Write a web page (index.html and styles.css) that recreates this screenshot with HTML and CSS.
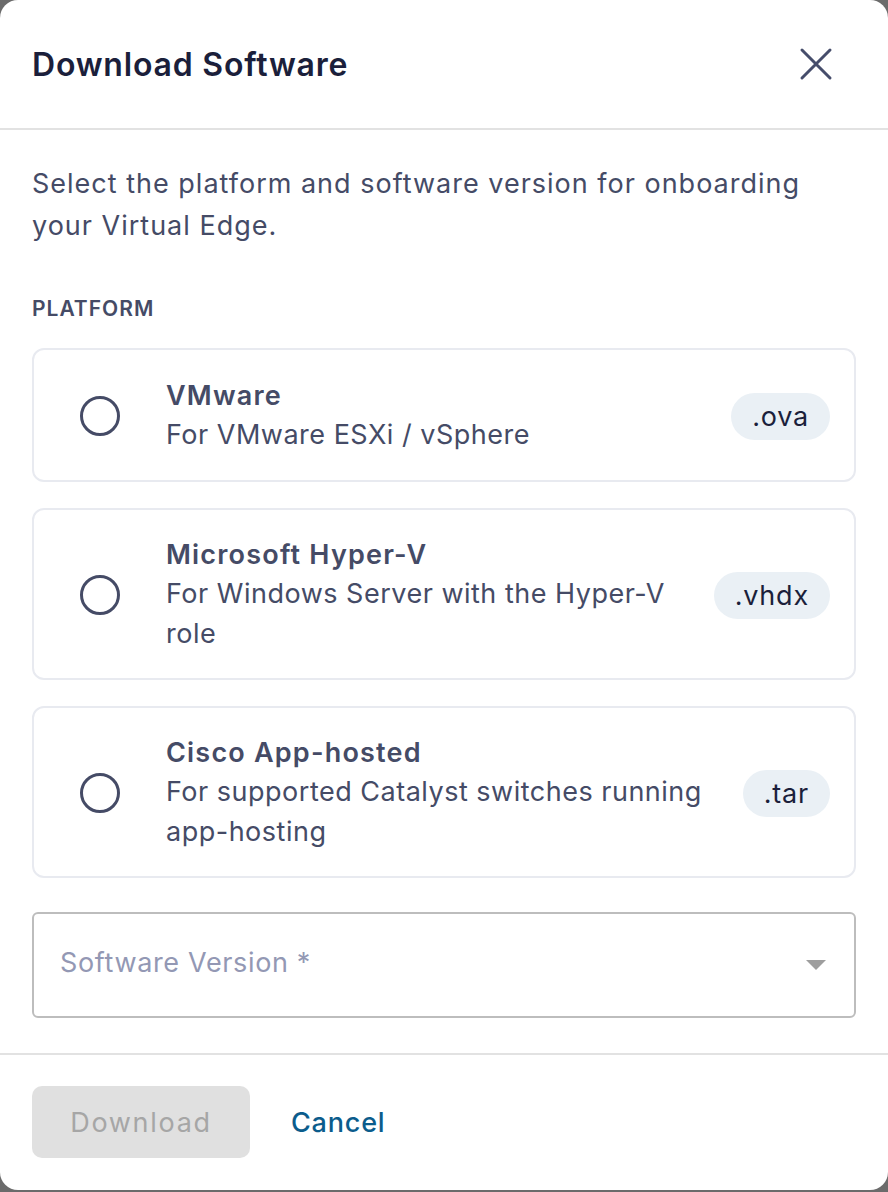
FILE: index.html
```html
<!DOCTYPE html>
<html lang="en">
<head>
    <meta charset="UTF-8">
    <meta name="viewport" content="width=device-width, initial-scale=1.0">
    <title>Download Software</title>
    <link rel="stylesheet" href="styles.css">
</head>
<body>

<div class="dialog" role="dialog" aria-labelledby="dialog-title">
    <header class="dialog-header">
        <h1 id="dialog-title">Download Software</h1>
        <button class="close" aria-label="Close">
            <svg width="34" height="34" viewBox="0 0 34 34" fill="none" stroke="currentColor" stroke-width="3" stroke-linecap="round">
                <path d="M3 3 L31 31 M31 3 L3 31"/>
            </svg>
        </button>
    </header>

    <div class="dialog-body">
        <p class="intro">Select the platform and software version for onboarding your Virtual Edge.</p>

        <h2 class="label">PLATFORM</h2>

        <div class="options">
            <label class="option">
                <input type="radio" name="platform" value="vmware">
                <span class="radio"></span>
                <span class="option-text">
                    <span class="option-title">VMware</span>
                    <span class="option-desc">For VMware ESXi / vSphere</span>
                </span>
                <span class="badge">.ova</span>
            </label>
            <label class="option">
                <input type="radio" name="platform" value="hyperv">
                <span class="radio"></span>
                <span class="option-text">
                    <span class="option-title">Microsoft Hyper-V</span>
                    <span class="option-desc">For Windows Server with the Hyper-V role</span>
                </span>
                <span class="badge">.vhdx</span>
            </label>
            <label class="option">
                <input type="radio" name="platform" value="cisco">
                <span class="radio"></span>
                <span class="option-text">
                    <span class="option-title">Cisco App-hosted</span>
                    <span class="option-desc">For supported Catalyst switches running app-hosting</span>
                </span>
                <span class="badge">.tar</span>
            </label>
        </div>

        <div class="select">
            <span class="placeholder">Software Version *</span>
            <span class="caret"></span>
        </div>
    </div>

    <footer class="dialog-footer">
        <button class="btn btn-primary" disabled>Download</button>
        <button class="btn btn-link">Cancel</button>
    </footer>
</div>

</body>
</html>
```

FILE: styles.css
```css
/* Reset */
* {
    margin: 0;
    padding: 0;
    box-sizing: border-box;
}
body {
    font-family: Inter, 'Noto Sans', sans-serif;
    background: #6b6b6b;
    color: #454b66;
    width: 888px;
    height: 1192px;
    overflow: hidden;
}
/* Dialog shell */
.dialog {
    background: #fff;
    border-radius: 18px;
    height: 1190px;
    display: flex;
    flex-direction: column;
}
.dialog-header {
    height: 130px;
    flex-shrink: 0;
    display: flex;
    align-items: center;
    justify-content: space-between;
    padding: 0 55px 0 32px;
    border-bottom: 2px solid #e2e2e2;
}
.dialog-header h1 {
    font-size: 32px;
    font-weight: 600;
    color: #1b1f3b;
    letter-spacing: 0.8px;
}
.close {
    background: none;
    border: none;
    color: #464d6b;
    display: flex;
    cursor: pointer;
}
/* Body */
.dialog-body {
    padding: 33px 32px 32px 32px;
    flex: 1;
}
.intro {
    font-size: 27px;
    line-height: 42px;
    letter-spacing: 1px;
    color: #454b66;
    max-width: 800px;
}
.label {
    font-size: 21px;
    line-height: 25px;
    font-weight: 600;
    margin-top: 49px;
    margin-bottom: 27px;
    letter-spacing: 1px;
    color: #454b66;
}
.options {
    display: flex;
    flex-direction: column;
    gap: 26px;
}
.option {
    display: flex;
    align-items: center;
    min-height: 134px;
    border: 2px solid #e8eaf0;
    border-radius: 12px;
    padding: 26px 24px 24px 46px;
    cursor: pointer;
}
.option input {
    display: none;
}
.radio {
    width: 40px;
    height: 40px;
    border: 3px solid #454b66;
    border-radius: 50%;
    flex-shrink: 0;
    margin-right: 46px;
}
.option-text {
    flex: 1;
    display: flex;
    flex-direction: column;
    margin-right: 24px;
}
.option-title {
    font-size: 27px;
    font-weight: 600;
    line-height: 38px;
    letter-spacing: 1.2px;
}
.option-desc {
    font-size: 27px;
    line-height: 40px;
    letter-spacing: 0.5px;
}
.badge {
    background: #eaf0f5;
    color: #1b1f3b;
    font-size: 27px;
    line-height: 33px;
    letter-spacing: 0.8px;
    border-radius: 24px;
    padding: 7px 21px;
    flex-shrink: 0;
}
/* Version dropdown */
.select {
    margin-top: 34px;
    height: 106px;
    border: 2px solid #bdbdbd;
    border-radius: 6px;
    display: flex;
    align-items: center;
    justify-content: space-between;
    padding: 0 28px 0 26px;
}
.placeholder {
    font-size: 27px;
    letter-spacing: 0.65px;
    color: #9398b4;
    margin-bottom: 6px;
}
.caret {
    width: 0;
    height: 0;
    border-left: 10px solid transparent;
    border-right: 10px solid transparent;
    border-top: 10px solid #9e9e9e;
}
/* Footer */
.dialog-footer {
    flex-shrink: 0;
    border-top: 2px solid #e2e2e2;
    padding: 31px 32px 32px;
    display: flex;
    align-items: center;
    gap: 41px;
}
.btn {
    font-family: inherit;
    font-size: 27px;
    border: none;
    background: none;
    cursor: pointer;
}
.btn-primary {
    background: #e0e0e0;
    color: #a6a6a6;
    letter-spacing: 1.7px;
    border-radius: 10px;
    width: 218px;
    height: 72px;
}
.btn-link {
    color: #0b5c8c;
    font-weight: 500;
    letter-spacing: 0.8px;
}
```
